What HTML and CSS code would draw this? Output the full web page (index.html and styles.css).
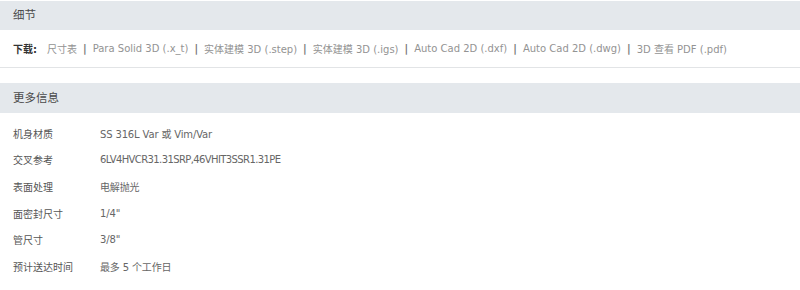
FILE: index.html
```html
<!DOCTYPE html>
<html lang="zh">
<head>
<meta charset="utf-8">
<link rel="stylesheet" href="styles.css">
</head>
<body>
<section class="panel">
  <div class="panel-head">细节</div>
  <div class="downloads">
    <span class="dl-label">下载:</span>
    <a class="dl-link">尺寸表</a><span class="sep">|</span>
    <a class="dl-link">Para Solid 3D (.x_t)</a><span class="sep">|</span>
    <a class="dl-link">实体建模 3D (.step)</a><span class="sep">|</span>
    <a class="dl-link">实体建模 3D (.igs)</a><span class="sep">|</span>
    <a class="dl-link">Auto Cad 2D (.dxf)</a><span class="sep">|</span>
    <a class="dl-link">Auto Cad 2D (.dwg)</a><span class="sep">|</span>
    <a class="dl-link">3D 查看 PDF (.pdf)</a>
  </div>
</section>
<section class="panel more">
  <div class="panel-head">更多信息</div>
  <div class="specs">
    <div class="row"><span class="key">机身材质</span><span class="val">SS 316L Var 或 Vim/Var</span></div>
    <div class="row"><span class="key">交叉参考</span><span class="val code">6LV4HVCR31.31SRP,46VHIT3SSR1.31PE</span></div>
    <div class="row"><span class="key">表面处理</span><span class="val">电解抛光</span></div>
    <div class="row"><span class="key">面密封尺寸</span><span class="val">1/4"</span></div>
    <div class="row"><span class="key">管尺寸</span><span class="val">3/8"</span></div>
    <div class="row"><span class="key">预计送达时间</span><span class="val">最多 5 个工作日</span></div>
  </div>
</section>
</body>
</html>
```
FILE: styles.css
```css
html, body {
  margin: 0;
  padding: 0;
  background: #ffffff;
}
body {
  font-family: "DejaVu Sans", "Noto Sans CJK SC", sans-serif;
  font-size: 10px;
  color: #555;
  padding-top: 1px;
}
.panel-head {
  height: 29px;
  line-height: 29px;
  background: #e4e8ec;
  padding-left: 13px;
  font-size: 11.5px;
  color: #4a4a4a;
}
.downloads {
  height: 37px;
  border-bottom: 1px solid #e2e4e6;
  padding-left: 13px;
  display: flex;
  align-items: center;
  color: #939393;
  font-size: 10px;
  white-space: nowrap;
}
.dl-label {
  font-weight: bold;
  color: #333;
  margin-right: 10px;
}
.sep {
  margin: 0 6px;
  color: #777;
  font-weight: bold;
}
.more {
  margin-top: 15px;
}
.more .panel-head {
  height: 30px;
  line-height: 30px;
}
.specs {
  padding-top: 7px;
}
.row {
  height: 26.67px;
  display: flex;
  align-items: center;
  padding-left: 13px;
}
.key {
  width: 87px;
  color: #555;
}
.val {
  color: #666;
  letter-spacing: -0.15px;
}
.val.code {
  letter-spacing: -0.6px;
}
```
